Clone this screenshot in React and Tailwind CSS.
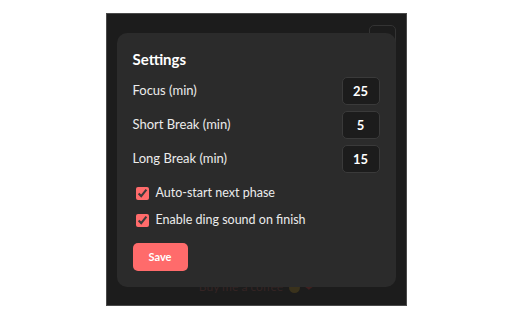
import { useState } from "react";

function NumberRow({ label, value, onChange }) {
  return (
    <div className="flex items-center justify-between">
      <label className="text-[13px] text-[#ececec]">{label}</label>
      <input
        type="text"
        value={value}
        onChange={(e) => onChange(e.target.value)}
        className="w-[38px] h-[28px] rounded-[5px] border border-[#3a3a3a] bg-[#1c1c1c] text-center text-[13px] font-bold text-white outline-none"
      />
    </div>
  );
}

export default function App() {
  const [focus, setFocus] = useState("25");
  const [shortBreak, setShortBreak] = useState("5");
  const [longBreak, setLongBreak] = useState("15");
  const [autoStart, setAutoStart] = useState(true);
  const [ding, setDing] = useState(true);

  return (
    <div
      className="w-full h-[320px] bg-white flex items-start justify-center pt-[13px]"
      style={{ fontFamily: "Lato, 'Noto Sans', sans-serif" }}
    >
      <div className="relative w-[301px] h-[293px] bg-[#1c1c1c] border border-[#4a4a4a] flex flex-col">
        {/* top bar (mostly covered by the modal) */}
        <div className="flex justify-end pt-[11px] pr-[10px]">
          <div className="w-[27px] h-[27px] rounded-[5px] border border-[#333333]"></div>
        </div>
        <div className="flex-1"></div>
        {/* footer, dimmed behind the modal */}
        <div className="flex items-center justify-center gap-[4px] pb-[9px] text-[12px] text-[#352424]">
          <span>Buy me a coffee</span>
          <span className="inline-block w-[11px] h-[11px] rounded-full bg-[#3a321c] ml-[2px]"></span>
          <span className="text-[11px] text-[#3f2020]">❤</span>
        </div>

        {/* settings modal */}
        <div className="absolute left-[10px] top-[19px] w-[279px] rounded-[10px] bg-[#2b2b2b] p-4">
          <h2 className="text-[15px] font-bold text-white leading-5 mb-2">Settings</h2>
          <div className="flex flex-col gap-[6px]">
            <NumberRow label="Focus (min)" value={focus} onChange={setFocus} />
            <NumberRow label="Short Break (min)" value={shortBreak} onChange={setShortBreak} />
            <NumberRow label="Long Break (min)" value={longBreak} onChange={setLongBreak} />
          </div>
          <div className="flex flex-col gap-[7px] mt-[10px] ml-[3px]">
            <label className="flex items-center gap-[7px] h-[20px] text-[12.5px] text-[#ececec]">
              <input
                type="checkbox"
                checked={autoStart}
                onChange={(e) => setAutoStart(e.target.checked)}
                className="w-[13px] h-[13px] accent-[#ff6b6b]"
              />
              Auto-start next phase
            </label>
            <label className="flex items-center gap-[7px] h-[20px] text-[12.5px] text-[#ececec]">
              <input
                type="checkbox"
                checked={ding}
                onChange={(e) => setDing(e.target.checked)}
                className="w-[13px] h-[13px] accent-[#ff6b6b]"
              />
              Enable ding sound on finish
            </label>
          </div>
          <button className="mt-[13px] w-[55px] h-[28px] rounded-[5px] bg-[#ff6b6b] text-[11px] font-bold text-white">
            Save
          </button>
        </div>
      </div>
    </div>
  );
}
